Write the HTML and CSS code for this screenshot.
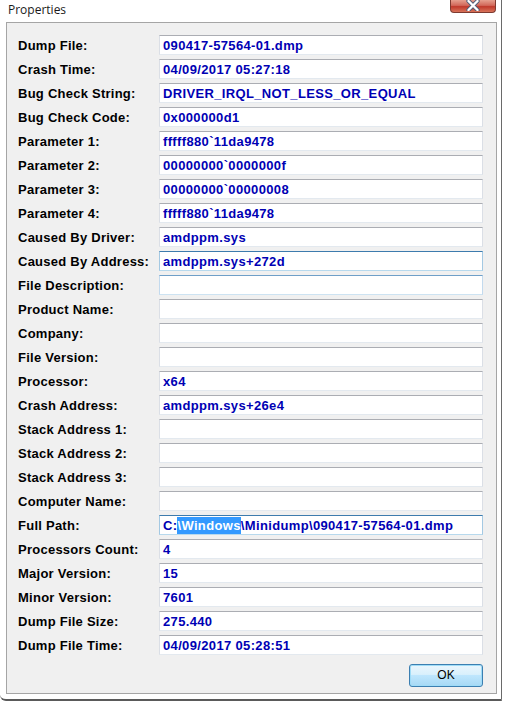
FILE: index.html
```html
<!DOCTYPE html>
<html>
<head>
<meta charset="utf-8">
<link rel="stylesheet" href="styles.css">
</head>
<body>
<div class="window">
  <div class="titlebar">
    <span class="title">Properties</span>
    <div class="close">
      <svg width="16" height="11" viewBox="0 0 16 11"><path d="M3.5 1 L12.5 10 M12.5 1 L3.5 10" stroke="#4e5e78" stroke-width="4.2" stroke-linecap="round"/><path d="M3.5 1 L12.5 10 M12.5 1 L3.5 10" stroke="#ffffff" stroke-width="2.4" stroke-linecap="round"/></svg>
    </div>
  </div>
  <div class="panel">
    <div class="form">
      <div class="label">Dump File:</div><div class="field">090417-57564-01.dmp</div>
      <div class="label">Crash Time:</div><div class="field">04/09/2017 05:27:18</div>
      <div class="label">Bug Check String:</div><div class="field">DRIVER_IRQL_NOT_LESS_OR_EQUAL</div>
      <div class="label">Bug Check Code:</div><div class="field">0x000000d1</div>
      <div class="label">Parameter 1:</div><div class="field">fffff880`11da9478</div>
      <div class="label">Parameter 2:</div><div class="field">00000000`0000000f</div>
      <div class="label">Parameter 3:</div><div class="field">00000000`00000008</div>
      <div class="label">Parameter 4:</div><div class="field">fffff880`11da9478</div>
      <div class="label">Caused By Driver:</div><div class="field">amdppm.sys</div>
      <div class="label">Caused By Address:</div><div class="field hot">amdppm.sys+272d</div>
      <div class="label">File Description:</div><div class="field soft"></div>
      <div class="label">Product Name:</div><div class="field"></div>
      <div class="label">Company:</div><div class="field"></div>
      <div class="label">File Version:</div><div class="field"></div>
      <div class="label">Processor:</div><div class="field">x64</div>
      <div class="label">Crash Address:</div><div class="field">amdppm.sys+26e4</div>
      <div class="label">Stack Address 1:</div><div class="field"></div>
      <div class="label">Stack Address 2:</div><div class="field"></div>
      <div class="label">Stack Address 3:</div><div class="field"></div>
      <div class="label">Computer Name:</div><div class="field"></div>
      <div class="label">Full Path:</div><div class="field hot">C:<span class="sel">\Windows</span>\Minidump\090417-57564-01.dmp</div>
      <div class="label">Processors Count:</div><div class="field">4</div>
      <div class="label">Major Version:</div><div class="field">15</div>
      <div class="label">Minor Version:</div><div class="field">7601</div>
      <div class="label">Dump File Size:</div><div class="field">275.440</div>
      <div class="label">Dump File Time:</div><div class="field">04/09/2017 05:28:51</div>
    </div>
    <div class="buttons">
      <div class="btn">OK</div>
    </div>
  </div>
</div>
</body>
</html>
```
FILE: styles.css
```css
html, body {
  margin: 0;
  padding: 0;
  background: #ffffff;
}
body {
  width: 505px;
  height: 704px;
  overflow: hidden;
  font-family: "Liberation Sans", Arial, sans-serif;
}
.window {
  width: 501px;
  height: 699px;
  border-right: 1px solid #6a6a6a;
  border-bottom: 2px solid #5a5a5a;
  border-bottom-left-radius: 6px;
  background: #ffffff;
}
.titlebar {
  height: 22px;
  display: flex;
  justify-content: space-between;
  align-items: flex-start;
}
.title {
  margin-left: 8px;
  margin-top: 2px;
  font-size: 12px;
  color: #1a1a1a;
  font-family: "Open Sans", "Liberation Sans", sans-serif;
  line-height: 15px;
}
.close {
  width: 44px;
  height: 12px;
  margin-right: 5px;
  border: 1px solid #7d3a30;
  border-top: none;
  border-radius: 0 0 4px 4px;
  background: linear-gradient(#e6a08f 0%, #d2685a 45%, #c0392b 55%, #d8735a 100%);
  display: flex;
  justify-content: center;
  align-items: flex-start;
}
.close svg {
  display: block;
}
.panel {
  margin-left: 6px;
  border: 1px solid #a5a5a5;
  background: #f0f0f0;
  padding: 12px 13px 0 11px;
  width: 465px;
  height: 658px;
}
.form {
  display: grid;
  grid-template-columns: 141px 324px;
  grid-auto-rows: 20px;
  row-gap: 4px;
}
.label {
  font-weight: bold;
  font-size: 13px;
  color: #000000;
  line-height: 21px;
  letter-spacing: 0.25px;
}
.field {
  box-sizing: border-box;
  height: 20px;
  background: #ffffff;
  border-top: 1px solid #abadb3;
  border-left: 1px solid #dbdfe6;
  border-right: 1px solid #dbdfe6;
  border-bottom: 1px solid #e3e9ef;
  padding-left: 3px;
  font-weight: bold;
  font-size: 13px;
  line-height: 19px;
  color: #0000b4;
  letter-spacing: 0.35px;
  white-space: nowrap;
  overflow: hidden;
}
.field.hot {
  border-top-color: #3d7bad;
  border-left-color: #a4c9e3;
  border-right-color: #a4c9e3;
  border-bottom-color: #b7d9ed;
}
.field.soft {
  border-top-color: #6f9fc8;
  border-left-color: #c3daee;
  border-right-color: #c3daee;
  border-bottom-color: #cde3f2;
}
.sel {
  background: #3399ff;
  color: #ffffff;
  display: inline-block;
  line-height: 17px;
}
.buttons {
  display: flex;
  justify-content: flex-end;
  margin-top: 9px;
}
.btn {
  box-sizing: border-box;
  width: 74px;
  height: 23px;
  border: 1px solid #3c7fb1;
  border-radius: 3px;
  background: linear-gradient(#eaf6fd 0%, #d9f0fc 45%, #bee6fd 50%, #a7d9f5 100%);
  box-shadow: inset 0 0 0 1px #9fdcf7;
  font-size: 12px;
  font-family: "Liberation Sans", Arial, sans-serif;
  color: #000000;
  text-align: center;
  line-height: 21px;
}
```
